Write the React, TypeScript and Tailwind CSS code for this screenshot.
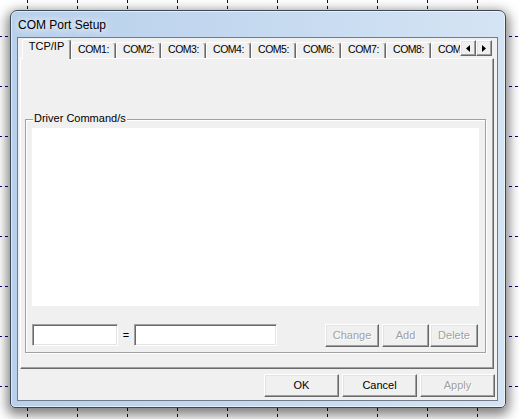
const COM_TABS = ['COM1:', 'COM2:', 'COM3:', 'COM4:', 'COM5:', 'COM6:', 'COM7:', 'COM8:', 'COM9:'];

const raised =
  'border border-t-white border-l-white border-r-[#696969] border-b-[#696969] shadow-[inset_-1px_-1px_0_#a0a0a0,inset_1px_1px_0_#e3e3e3] bg-[#f0f0f0]';
const sunken =
  'border border-t-[#a0a0a0] border-l-[#a0a0a0] border-r-white border-b-white shadow-[inset_1px_1px_0_#696969,inset_-1px_-1px_0_#e3e3e3] bg-white';
const disabledText = 'text-[#a0a0a0] [text-shadow:1px_1px_0_#fff]';

function GridBackdrop() {
  const xs = Array.from({ length: 10 }, (_, i) => 27.5 + i * 50);
  const ys = Array.from({ length: 8 }, (_, i) => 36.5 + i * 50);
  return (
    <svg className="absolute inset-0" width="519" height="419">
      {xs.map((x) => (
        <line key={`v${x}`} x1={x} y1={0} x2={x} y2={419} stroke="#000080" strokeDasharray="3 3" />
      ))}
      {ys.map((y) => (
        <line key={`h${y}`} x1={0} y1={y} x2={519} y2={y} stroke="#000080" strokeDasharray="3 3" strokeDashoffset="1" />
      ))}
    </svg>
  );
}

function Arrow({ dir }: { dir: 'left' | 'right' }) {
  return (
    <button className={`flex h-[16px] w-[16px] items-center justify-center ${raised}`}>
      <svg width="4" height="7" viewBox="0 0 4 7">
        {dir === 'left' ? <polygon points="4,0 4,7 0,3.5" fill="#000" /> : <polygon points="0,0 0,7 4,3.5" fill="#000" />}
      </svg>
    </button>
  );
}

function TabStrip() {
  return (
    <div className="flex h-[20px] pl-[4px]">
      <div className="relative z-10 -mb-[1px] flex h-[21px] w-[438px] items-end overflow-hidden">
        <div className="flex h-[20px] w-[49px] shrink-0 justify-center rounded-t-[3px] border-l border-t border-l-white border-t-white border-r border-r-[#696969] bg-[#f0f0f0] pt-[0px] leading-[13px] shadow-[inset_-1px_0_0_#a0a0a0]">
          TCP/IP
        </div>
        {COM_TABS.map((t) => (
          <div
            key={t}
            className="mb-[1px] flex h-[16px] w-[45px] shrink-0 justify-center rounded-t-[3px] border-l border-t border-l-white border-t-white border-r border-r-[#696969] bg-[#f0f0f0] text-[10.5px] leading-[13px] tracking-[-0.5px] shadow-[inset_-1px_0_0_#a0a0a0]"
          >
            {t}
          </div>
        ))}
      </div>
      <div className="mt-[2px] flex self-start">
        <Arrow dir="left" />
        <Arrow dir="right" />
      </div>
    </div>
  );
}

function DriverGroup() {
  return (
    <div className="relative ml-[4px] mt-[60px] h-[234px] w-[461px] border border-[#a0a0a0] px-[6px] pt-[8px] shadow-[inset_1px_1px_0_#fff,1px_1px_0_#fff]">
      <span className="absolute -top-[8px] left-[7px] bg-[#f0f0f0] px-[1px] leading-[13px]">Driver Command/s</span>
      <div className="h-[178px] w-[447px] bg-white" />
      <div className="mt-[18px] flex h-[23px] items-center">
        <input className={`h-[22px] w-[86px] self-start outline-none ${sunken}`} />
        <span className="w-[16px] text-center">=</span>
        <input className={`h-[22px] w-[143px] self-start outline-none ${sunken}`} />
        <div className="ml-auto mr-[1px] flex">
          <button disabled className={`h-[23px] w-[54px] ${raised} ${disabledText}`}>Change</button>
          <button disabled className={`ml-[3px] h-[23px] w-[47px] ${raised} ${disabledText}`}>Add</button>
          <button disabled className={`ml-[1px] h-[23px] w-[48px] ${raised} ${disabledText}`}>Delete</button>
        </div>
      </div>
    </div>
  );
}

export default function App() {
  return (
    <div className="relative h-[419px] w-[519px] overflow-hidden bg-white pl-[10px] pt-[10px] font-['Liberation_Sans',Arial,sans-serif] text-[11px] text-black">
      <GridBackdrop />
      <div className="relative flex h-[398px] w-[496px] flex-col rounded-t-[7px] rounded-b-[5px] border border-[#3e4755] bg-[linear-gradient(90deg,#b8d0eb,#c6daf0_55%,#d5e4f4)] shadow-[0_4px_12px_3px_rgba(0,0,0,0.5),inset_0_0_0_1px_rgba(255,255,255,0.55)]">
        <div className="flex h-[26px] items-center pl-[7px] pt-[1px] text-[12px] [text-shadow:0_0_6px_#fff,0_0_10px_#fff]">
          COM Port Setup
        </div>
        <div className="ml-[6px] mr-[7px] flex h-[364px] w-[481px] flex-col border border-[#707c8a] bg-[#f0f0f0]">
          <TabStrip />
          <div className="ml-[2px] h-[311px] w-[474px] border border-t-white border-l-white border-r-[#696969] border-b-[#696969] shadow-[inset_-1px_-1px_0_#a0a0a0]">
            <DriverGroup />
          </div>
          <div className="mt-[5px] flex justify-end gap-[3px] pr-[2px]">
            <button className={`h-[23px] w-[75px] ${raised}`}>OK</button>
            <button className={`h-[23px] w-[75px] ${raised}`}>Cancel</button>
            <button disabled className={`h-[23px] w-[75px] ${raised} ${disabledText}`}>Apply</button>
          </div>
        </div>
      </div>
    </div>
  );
}
